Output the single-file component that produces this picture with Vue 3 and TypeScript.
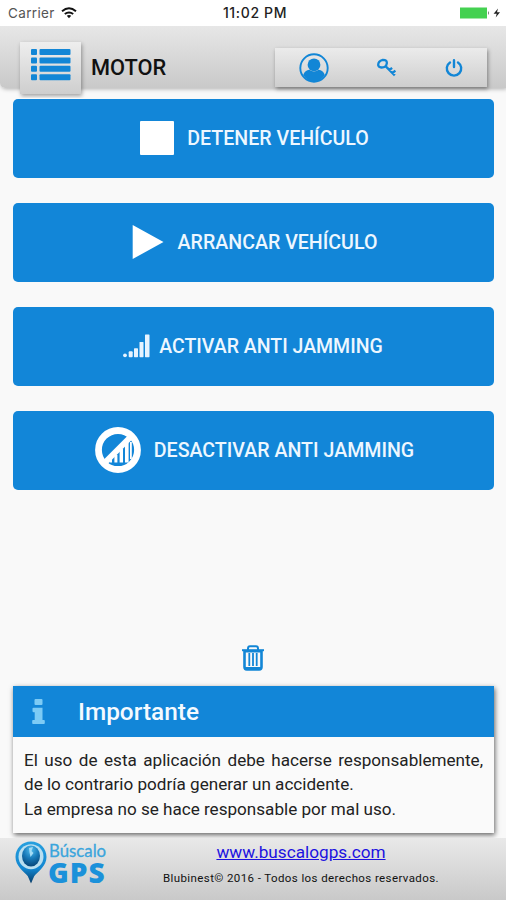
<script setup lang="ts">
interface Action {
  id: 'stop' | 'play' | 'signal' | 'nosignal'
  label: string
}

const actions: Action[] = [
  { id: 'stop', label: 'DETENER VEHÍCULO' },
  { id: 'play', label: 'ARRANCAR VEHÍCULO' },
  { id: 'signal', label: 'ACTIVAR ANTI JAMMING' },
  { id: 'nosignal', label: 'DESACTIVAR ANTI JAMMING' },
]
</script>

<template>
  <div class="screen">
    <div class="status">
      <div class="carrier">
        <span>Carrier</span>
        <svg width="16" height="12" viewBox="0 0 16 12" fill="none" stroke="#111" stroke-width="1.9">
          <path d="M1 4.3Q8-1.7 15 4.3M3.8 7.1Q8 3.7 12.2 7.1" />
          <path d="M5.8 8.8Q8 7.2 10.2 8.8L8 11.2Z" fill="#111" stroke="none" />
        </svg>
      </div>
      <span class="clock">11:02 PM</span>
      <svg class="battery" width="42" height="14" viewBox="0 0 42 14">
        <rect x="0" y="1.5" width="27" height="11" fill="#44d151" />
        <path d="M28 5Q30 7 28 9Z" fill="#777" />
        <path d="M38 2.5L33.6 7.8H36.7L35.7 11.6L40 6.3H37Z" fill="#222" />
      </svg>
    </div>

    <header class="header">
      <button class="menu" aria-label="Menu">
        <svg width="40" height="32" viewBox="0 0 40 32" fill="#1286d6">
          <rect x="0" y="0" width="6" height="6" rx="1" /><rect x="8.5" y="0" width="31" height="6" rx="1" />
          <rect x="0" y="8.4" width="6" height="6" rx="1" /><rect x="8.5" y="8.4" width="31" height="6" rx="1" />
          <rect x="0" y="16.8" width="6" height="6" rx="1" /><rect x="8.5" y="16.8" width="31" height="6" rx="1" />
          <rect x="0" y="25.2" width="6" height="6" rx="1" /><rect x="8.5" y="25.2" width="31" height="6" rx="1" />
        </svg>
      </button>
      <h1 class="title">MOTOR</h1>
      <nav class="tools">
        <svg width="30" height="30" viewBox="0 0 30 30">
          <circle cx="15" cy="15" r="13.7" fill="none" stroke="#1286d6" stroke-width="1.9" />
          <path d="M10.4 16.8Q15 20 19.6 16.8Q24 17.2 25.8 22Q21.5 28.7 15 28.7Q8.5 28.7 4.2 22Q6 17.2 10.4 16.8Z" fill="#1286d6" />
          <circle cx="15" cy="11.8" r="6.4" fill="#1286d6" />
        </svg>
        <svg width="20" height="20" viewBox="0 0 20 20" fill="none" stroke="#1286d6" stroke-width="2.3">
          <path d="M1.2 7.2Q1 3 5.8 1.8Q10.2 1.7 9.8 5.3Q9.2 9.6 4.3 9.5Q1.8 9.3 1.2 7.2ZM8 7.6L17.8 17.4M12.4 12L15.1 9.8M15.4 15L18.4 12.7" />
        </svg>
        <svg width="18" height="18" viewBox="0 0 18 18" fill="none" stroke="#1286d6" stroke-width="2.4" stroke-linecap="round">
          <path d="M5 3.4A7.2 7.2 0 1 0 13 3.4M9 1.2V8" />
        </svg>
      </nav>
    </header>

    <main class="main">
      <button v-for="a in actions" :key="a.id" class="action" :class="a.id">
        <svg v-if="a.id === 'stop'" width="34" height="34" viewBox="0 0 34 34">
          <rect width="34" height="34" rx="1" fill="#fff" />
        </svg>
        <svg v-else-if="a.id === 'play'" width="32" height="36" viewBox="0 0 32 36">
          <path d="M.7 1L31.5 18L.7 35Z" fill="#fff" />
        </svg>
        <svg v-else-if="a.id === 'signal'" width="27" height="24" viewBox="0 0 27 24" fill="#e6f3ff">
          <circle cx="2" cy="21.3" r="1.9" />
          <rect x="5.7" y="17.2" width="4" height="6" rx="1" />
          <rect x="11" y="14.2" width="4" height="9" rx=".6" />
          <rect x="16.5" y="8" width="4" height="15.2" rx=".6" />
          <rect x="22" y=".5" width="4.5" height="22.7" rx=".6" />
        </svg>
        <svg v-else width="46" height="46" viewBox="0 0 46 46">
          <g fill="#fff">
            <rect x="14.6" y="31" width="2.4" height="4.5" />
            <rect x="19.4" y="28" width="3" height="7.5" />
            <rect x="24.6" y="22" width="3.4" height="13.5" />
            <rect x="30" y="16" width="3.6" height="19.5" />
            <rect x="35" y="15" width="1.8" height="17" />
          </g>
          <circle cx="23" cy="23" r="19.5" fill="none" stroke="#fff" stroke-width="6.8" />
          <path d="M9 36.5L36.5 9" stroke="#fff" stroke-width="6" />
        </svg>
        <span>{{ a.label }}</span>
      </button>
    </main>

    <div class="trash">
      <svg width="24" height="26" viewBox="0 0 24 26" fill="none" stroke="#1286d6">
        <path d="M1 5.2H23" stroke-width="2" />
        <path d="M7 5V3.6Q7 1.2 9 1.2H15Q17 1.2 17 3.6V5" stroke-width="2" />
        <path d="M3.5 5.5V22Q3.5 24.4 5.8 24.4H18.2Q20.5 24.4 20.5 22V5.5" stroke-width="2.6" />
        <path d="M8.3 8V21M12 8V21M15.7 8V21" stroke-width="1.8" />
        <path d="M3 6.5H21M4 23H20" stroke-width="2" />
      </svg>
    </div>

    <section class="notice">
      <div class="notice-head">
        <svg width="13" height="26" viewBox="0 0 13 26" fill="#7dcbf5">
          <rect x="2.5" y="0" width="8" height="6" rx="1" />
          <path d="M.5 9.5Q.5 8.7 1.5 8.7H10.5V21H12Q12.8 21 12.8 22V24Q12.8 25 12 25H1Q.2 25 .2 24V22Q.2 21 1 21H2.7V13.2H1.5Q.5 13.2 .5 12Z" />
        </svg>
        <h2>Importante</h2>
      </div>
      <div class="notice-body">
        <p class="lead">El uso de esta aplicación debe hacerse responsablemente,</p>
        <p class="second">de lo contrario podría generar un accidente.</p>
        <p class="third">La empresa no se hace responsable por mal uso.</p>
      </div>
    </section>

    <footer class="footer">
      <div class="logo">
        <svg width="32" height="44" viewBox="0 0 32 44">
          <defs>
            <radialGradient id="globe" cx=".5" cy=".2" r=".85">
              <stop offset="0" stop-color="#4ebbed" />
              <stop offset=".5" stop-color="#1779b8" />
              <stop offset="1" stop-color="#043f70" />
            </radialGradient>
            <linearGradient id="pin" x1="0" y1="0" x2="0" y2="1">
              <stop offset="0" stop-color="#27a0df" />
              <stop offset=".65" stop-color="#1286d0" />
              <stop offset="1" stop-color="#083c68" />
            </linearGradient>
          </defs>
          <path d="M16 .5C7.2.5.5 7.3.5 16C.5 25 9 30.5 12.7 35L16 42.5L19.3 35C23 30.5 31.5 25 31.5 16C31.5 7.3 24.8.5 16 .5Z" fill="url(#pin)" />
          <circle cx="16" cy="15.7" r="12.5" fill="#b9dff0" />
          <ellipse cx="16" cy="15" rx="9" ry="10.5" fill="url(#globe)" />
          <path d="M14 7L18 6L16.5 10L18.5 12L15.5 16L14.5 11.5Z" fill="#a4dcf5" />
        </svg>
        <div class="brand">
          <span class="brand-top">Búscalo</span>
          <span class="brand-bottom">GPS</span>
        </div>
      </div>
      <div class="legal">
        <a href="#">www.buscalogps.com</a>
        <p>Blubinest© 2016 - Todos los derechos reservados.</p>
      </div>
    </footer>
  </div>
</template>

<style>
body {
  margin: 0;
  background: #f9f9f9;
}
</style>

<style scoped>
.screen {
  width: 506px;
  height: 900px;
  display: flex;
  flex-direction: column;
  overflow: hidden;
  background: #f9f9f9;
  font-family: Roboto, "Liberation Sans", sans-serif;
  color: #111;
}
h1, h2, p {
  margin: 0;
}
button {
  border: 0;
  padding: 0;
  font: inherit;
}
svg {
  display: block;
  flex: none;
}
.status {
  height: 26px;
  flex: none;
  display: grid;
  grid-template-columns: 1fr auto 1fr;
  align-items: center;
  padding: 0 4px 0 8px;
  box-sizing: border-box;
  background: #fff;
  font: 13.5px/26px Inter, sans-serif;
}
.carrier {
  display: flex;
  align-items: center;
  gap: 6px;
  letter-spacing: 0.35px;
  color: #555;
}
.clock {
  font-size: 14px;
  font-weight: 500;
  letter-spacing: 0.65px;
  color: #222;
}
.battery {
  justify-self: end;
}
.header {
  height: 62px;
  flex: none;
  display: flex;
  align-items: flex-start;
  box-sizing: border-box;
  padding: 16px 19px 0 20px;
  background: linear-gradient(#e7e7e7, #c9c9c9);
  border-bottom-left-radius: 5px;
  box-shadow: 1px 1px 4px rgba(0, 0, 0, 0.3);
  clip-path: inset(0 0 -10px 0);
}
.menu {
  width: 61px;
  height: 52px;
  display: flex;
  justify-content: center;
  padding-top: 7px;
  background: linear-gradient(#eee, #cecece);
  box-shadow: 1px 2px 4px rgba(0, 0, 0, 0.35);
}
.title {
  margin: 12px 0 0 10px;
  font-size: 21.8px;
  line-height: 27px;
  font-weight: 500;
}
.tools {
  width: 212px;
  height: 39px;
  margin: 6px 0 0 auto;
  display: flex;
  align-items: center;
  justify-content: space-between;
  box-sizing: border-box;
  padding: 0 24px;
  background: linear-gradient(#ebebeb, #cecece);
  box-shadow: 1px 2px 4px rgba(0, 0, 0, 0.4);
}
.main {
  flex: none;
  display: grid;
  grid-auto-rows: 79px;
  gap: 25px;
  padding: 10.5px 12px 0 13px;
}
.action {
  display: flex;
  align-items: center;
  justify-content: center;
  gap: 13px;
  border-radius: 5px;
  background: #1286d8;
  color: #edf7ff;
  font-size: 19.6px;
  font-weight: 500;
  white-space: nowrap;
}
.stop, .nosignal {
  padding-left: 2px;
}
.play {
  gap: 14px;
  padding-left: 2px;
}
.signal {
  gap: 9px;
  padding-right: 1px;
  font-size: 19.5px;
}
.trash {
  height: 26px;
  margin-top: 155px;
  display: flex;
  justify-content: center;
}
.notice {
  height: 147px;
  flex: none;
  margin: 15.5px 12px 0 13px;
  background: #fafafa;
  box-shadow: 1px 2px 5px rgba(0, 0, 0, 0.6);
}
.notice-head {
  height: 51px;
  display: flex;
  align-items: center;
  gap: 33px;
  padding-left: 19px;
  background: #1286d8;
  color: #f4faff;
}
.notice-head h2 {
  font-size: 24.4px;
  font-weight: 500;
}
.notice-body {
  padding: 10.5px 11px 0;
  font-size: 17.1px;
  line-height: 24.5px;
  color: #222;
  white-space: nowrap;
}
.lead {
  text-align-last: justify;
}
.footer {
  flex: 1;
  margin-top: 5px;
  display: flex;
  background: linear-gradient(#e9e9e9, #c9c9c9);
}
.logo {
  display: flex;
  width: 148px;
  padding: 3px 0 0 15px;
  box-sizing: border-box;
  gap: 2px;
}
.brand {
  display: flex;
  flex-direction: column;
  font-family: Lato, sans-serif;
}
.brand-top {
  font-size: 16.8px;
  line-height: 20px;
  color: #3ba5dc;
  -webkit-text-stroke: 0.3px #3ba5dc;
}
.brand-bottom {
  margin-left: -1px;
  font-family: "Open Sans", sans-serif;
  font-size: 28px;
  line-height: 22px;
  letter-spacing: 1px;
  font-weight: 800;
  color: #1b91da;
}
.legal {
  width: 306px;
  display: flex;
  flex-direction: column;
  align-items: center;
  white-space: nowrap;
}
.legal a {
  margin-top: 4px;
  font-size: 17.2px;
  line-height: 20px;
  color: #1c12e0;
}
.legal p {
  margin-top: 9px;
  font-size: 11.5px;
  line-height: 15px;
  letter-spacing: 0.4px;
}
</style>
